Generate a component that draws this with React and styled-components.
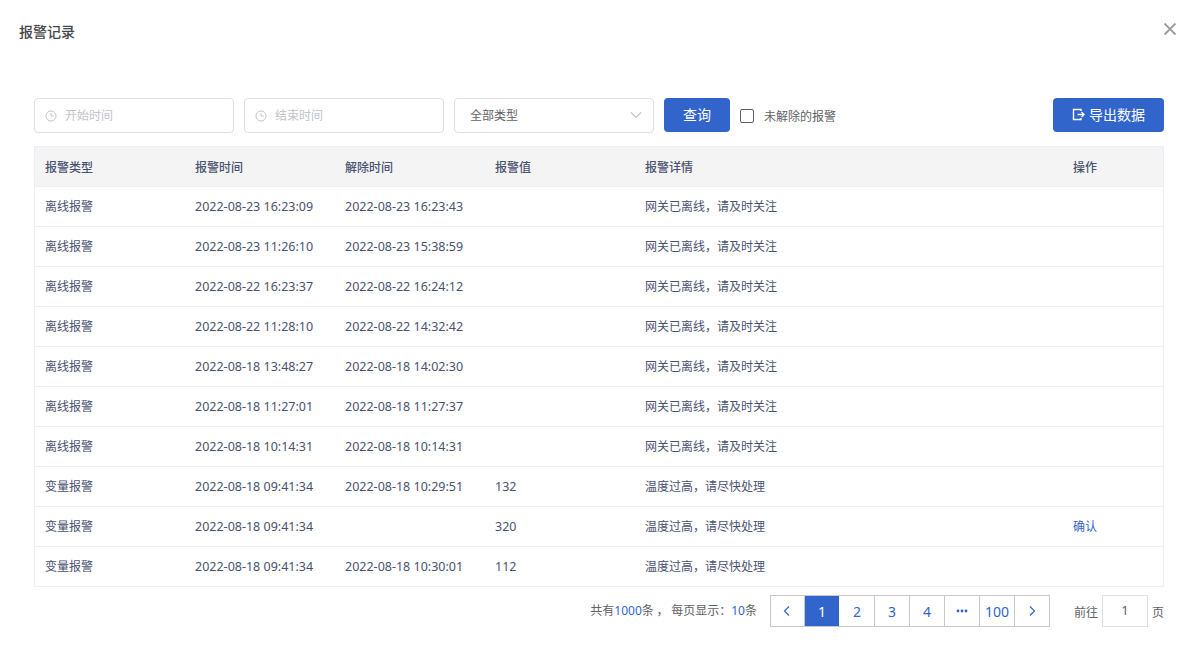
import React from "react";
import styled, { createGlobalStyle } from "styled-components";

const Global = createGlobalStyle`
  html, body { margin: 0; padding: 0; background: #fff; }
  body { font-family: "Noto Sans CJK SC", sans-serif; font-size: 12px; color: #3d4660; }
  * { box-sizing: border-box; }
`;

const Dialog = styled.div`
  position: relative;
  width: 1199px;
  height: 664px;
  background: #fff;
  overflow: hidden;
`;
const Header = styled.header`
  height: 98px;
  padding: 21px 19px 0;
`;
const Title = styled.h2`
  margin: 0;
  font-size: 14px;
  line-height: 20px;
  font-weight: 500;
  color: #45474b;
`;
const Close = styled.button`
  position: absolute;
  top: 22px;
  right: 22px;
  width: 14px;
  height: 14px;
  padding: 0;
  border: 0;
  background: none;
  display: flex;
`;
const Body = styled.div`
  padding: 0 35px 0 34px;
`;
const Toolbar = styled.div`
  display: flex;
  align-items: flex-start;
  height: 35px;
  margin-bottom: 13px;
`;
const Field = styled.div`
  width: 200px;
  height: 35px;
  margin-right: 10px;
  border: 1px solid #dcdfe6;
  border-radius: 4px;
  display: flex;
  align-items: center;
  padding: 0 0 2px 11px;
  color: #c0c4cc;
  gap: 8px;
`;
const SelectBox = styled(Field)`
  justify-content: space-between;
  padding: 0 11px 2px 15px;
  color: #606266;
`;
const Button = styled.button`
  height: 34px;
  padding: 0 0 2px;
  border: 0;
  border-radius: 4px;
  background: #3165cc;
  color: #fff;
  font: 400 14px "Noto Sans CJK SC", sans-serif;
  display: flex;
  align-items: center;
  justify-content: center;
  gap: 4px;
`;
const QueryButton = styled(Button)`
  width: 66px;
`;
const ExportButton = styled(Button)`
  width: 111px;
  margin-left: auto;
`;
const CheckWrap = styled.label`
  display: flex;
  align-items: center;
  height: 34px;
  margin-left: 10px;
  gap: 10px;
  color: #606266;
`;
const CheckBox = styled.span`
  width: 14px;
  height: 14px;
  margin-top: 1px;
  border: 1px solid #606266;
  border-radius: 2px;
`;
const Table = styled.table`
  width: 1130px;
  border-collapse: separate;
  border-spacing: 0;
  table-layout: fixed;
  border: 1px solid #ebeef5;
  border-bottom: 0;
`;
const Th = styled.th`
  height: 40px;
  padding: 0 10px;
  text-align: left;
  font-size: 12px;
  font-weight: 500;
  background: #f4f4f5;
  color: #4a5270;
  border-bottom: 1px solid #ebeef5;
`;
const Td = styled.td`
  height: 40px;
  padding: 0 10px 2px;
  border-bottom: 1px solid #ebeef5;
  color: #4a5270;
`;
const Num = styled.span`
  font-family: "Noto Sans", sans-serif;
  font-size: 12.5px;
`;
const Link = styled.a`
  color: #3165cc;
`;
const Footer = styled.div`
  display: flex;
  justify-content: flex-end;
  align-items: center;
  margin-top: 8px;
  height: 32px;
`;
const Total = styled.span`
  color: #606266;
  margin-right: 13px;
  padding-bottom: 2px;
`;
const Blue = styled.span`
  color: #3165cc;
  font-family: "Noto Sans", sans-serif;
`;
const Pager = styled.div`
  display: flex;
  border: 1px solid #c8c8c8;
`;
const Page = styled.div`
  width: 35px;
  height: 30px;
  display: flex;
  align-items: center;
  justify-content: center;
  font-family: "Noto Sans", sans-serif;
  font-size: 14px;
  color: ${p => (p.$active ? "#fff" : "#3165cc")};
  background: ${p => (p.$active ? "#3165cc" : "#fff")};
  border-left: 1px solid ${p => (p.$first ? "transparent" : "#c8c8c8")};
  &:first-child { border-left: 0; width: 33px; }
`;
const Jump = styled.div`
  display: flex;
  align-items: center;
  margin-left: 24px;
  color: #606266;
`;
const JumpInput = styled.div`
  width: 46px;
  height: 32px;
  margin: 0 4px;
  border: 1px solid #dcdfe6;
  display: flex;
  align-items: center;
  justify-content: center;
  font-family: "Noto Sans", sans-serif;
  font-size: 13px;
  padding-bottom: 2px;
`;

const ClockIcon = () => (
  <svg width="12" height="12" viewBox="0 0 12 12" fill="none" stroke="#c0c4cc" strokeWidth="1" style={{ margin: "2px 0 0 -1px" }}>
    <circle cx="6" cy="6" r="5" />
    <path d="M6 3v3h2.500" />
  </svg>
);
const Chevron = ({ dir, color = "#3165cc", size = 12 }) => (
  <svg width={size} height={size} viewBox="0 0 12 12" fill="none" stroke={color} strokeWidth="1.2">
    <path d={dir === "left" ? "M8 1.500L3.500 6 8 10.500" : dir === "right" ? "M4 1.500L8.500 6 4 10.500" : "M1 3.500l5 5 5-5"} />
  </svg>
);
const MoreIcon = () => (
  <svg width="12" height="4" viewBox="0 0 12 4" fill="#3165cc">
    <circle cx="2" cy="2" r="1.400" />
    <circle cx="6" cy="2" r="1.400" />
    <circle cx="10" cy="2" r="1.400" />
  </svg>
);

const A = "网关已离线，请及时关注";
const B = "温度过高，请尽快处理";
const rows = [
  ["离线报警", "2022-08-23 16:23:09", "2022-08-23 16:23:43", "", A, ""],
  ["离线报警", "2022-08-23 11:26:10", "2022-08-23 15:38:59", "", A, ""],
  ["离线报警", "2022-08-22 16:23:37", "2022-08-22 16:24:12", "", A, ""],
  ["离线报警", "2022-08-22 11:28:10", "2022-08-22 14:32:42", "", A, ""],
  ["离线报警", "2022-08-18 13:48:27", "2022-08-18 14:02:30", "", A, ""],
  ["离线报警", "2022-08-18 11:27:01", "2022-08-18 11:27:37", "", A, ""],
  ["离线报警", "2022-08-18 10:14:31", "2022-08-18 10:14:31", "", A, ""],
  ["变量报警", "2022-08-18 09:41:34", "2022-08-18 10:29:51", "132", B, ""],
  ["变量报警", "2022-08-18 09:41:34", "", "320", B, "确认"],
  ["变量报警", "2022-08-18 09:41:34", "2022-08-18 10:30:01", "112", B, ""],
];
const widths = [150, 150, 150, 150, 428, 100];
const heads = ["报警类型", "报警时间", "解除时间", "报警值", "报警详情", "操作"];

const renderCell = (c, j) => {
  if (j === 5 && c) return <Link>{c}</Link>;
  if (j >= 1 && j <= 3 && c) return <Num>{c}</Num>;
  return c;
};

export default function App() {
  return (
    <Dialog>
      <Global />
      <Header><Title>报警记录</Title></Header>
      <Close aria-label="关闭">
        <svg width="14" height="14" viewBox="0 0 14 14" stroke="#9a9da4" strokeWidth="1.8"><path d="M1.500 1.500l11 11M12.500 1.500l-11 11" /></svg>
      </Close>
      <Body>
        <Toolbar>
          <Field><ClockIcon />开始时间</Field>
          <Field><ClockIcon />结束时间</Field>
          <SelectBox>全部类型<Chevron dir="down" color="#c0c4cc" /></SelectBox>
          <QueryButton>查询</QueryButton>
          <CheckWrap><CheckBox />未解除的报警</CheckWrap>
          <ExportButton>
            <svg width="13" height="13" viewBox="0 0 13 13" fill="none" stroke="#fff" strokeWidth="1.4">
              <path d="M9 3V1.500H1.500v10H9V10M5.500 6.500h6.500M9.500 4l2.500 2.500L9.500 9" />
            </svg>
            导出数据
          </ExportButton>
        </Toolbar>
        <Table>
          <colgroup>{widths.map((w, i) => <col key={i} style={{ width: w }} />)}</colgroup>
          <thead><tr>{heads.map(h => <Th key={h}>{h}</Th>)}</tr></thead>
          <tbody>
            {rows.map((r, i) => (
              <tr key={i}>
                {r.map((c, j) => <Td key={j}>{renderCell(c, j)}</Td>)}
              </tr>
            ))}
          </tbody>
        </Table>
        <Footer>
          <Total>共有<Blue>1000</Blue>条 ， 每页显示：<Blue>10</Blue>条</Total>
          <Pager>
            <Page><Chevron dir="left" /></Page>
            <Page $active>1</Page>
            <Page $first>2</Page>
            <Page>3</Page>
            <Page>4</Page>
            <Page><MoreIcon /></Page>
            <Page>100</Page>
            <Page><Chevron dir="right" /></Page>
          </Pager>
          <Jump>前往<JumpInput>1</JumpInput>页</Jump>
        </Footer>
      </Body>
    </Dialog>
  );
}
